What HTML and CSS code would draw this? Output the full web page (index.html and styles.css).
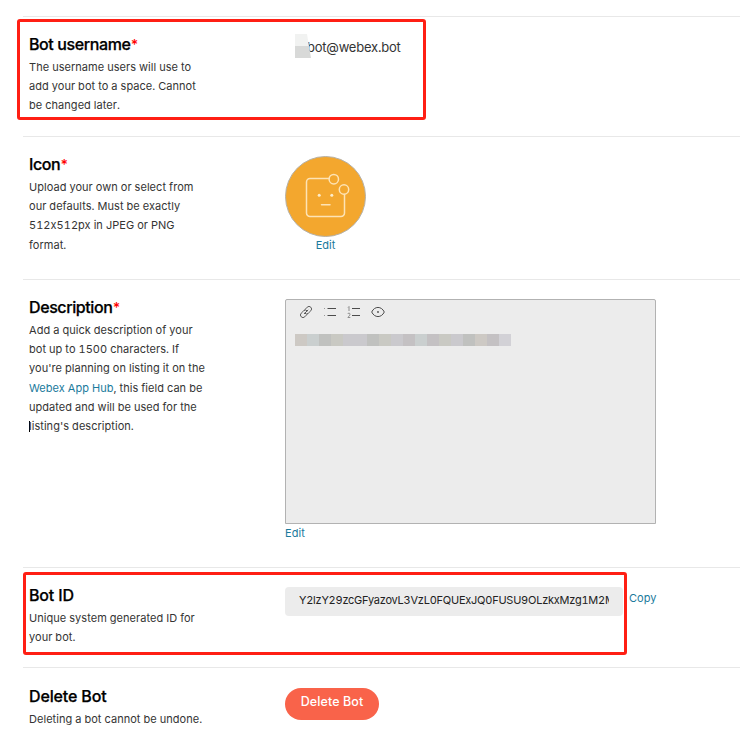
FILE: index.html
```html
<!DOCTYPE html>
<html lang="en">
<head>
<meta charset="utf-8">
<title>Bot settings</title>
<link rel="stylesheet" href="styles.css">
</head>
<body>
<main class="settings">
  <section class="row row-username">
    <div class="info">
      <h2>Bot username<span class="req">*</span></h2>
      <p>The username users will use to<br>add your bot to a space. Cannot<br>be changed later.</p>
    </div>
    <div class="field username"><span class="mask"></span><span class="address">bot@webex.bot</span></div>
  </section>

  <section class="row row-icon">
    <div class="info">
      <h2>Icon<span class="req">*</span></h2>
      <p>Upload your own or select from<br>our defaults. Must be exactly<br>512x512px in JPEG or PNG<br>format.</p>
    </div>
    <div class="field avatar-field">
      <svg class="avatar" width="81" height="81" viewBox="0 0 81 81" fill="none">
        <circle cx="40.500" cy="40.500" r="40" fill="#f3a72e" stroke="#b5b1a8"/>
        <g stroke="#fde3b5" stroke-width="1.500" stroke-linecap="round">
          <path d="M44 22.500H25a3.500 3.500 0 0 0-3.500 3.500V57a3.500 3.500 0 0 0 3.500 3.500H56a3.500 3.500 0 0 0 3.500-3.500V38.500"/>
          <circle cx="48.800" cy="23.200" r="4.700"/>
          <circle cx="59" cy="33.500" r="4.700"/>
          <path d="M36.500 48.800H45"/>
        </g>
        <circle cx="34.200" cy="39.300" r="1.500" fill="#fdecc9"/>
        <circle cx="46.800" cy="39.300" r="1.500" fill="#fdecc9"/>
      </svg>
      <a class="link">Edit</a>
    </div>
  </section>

  <section class="row row-description">
    <div class="info">
      <h2>Description<span class="req">*</span></h2>
      <p>Add a quick description of your<br>bot up to 1500 characters. If<br>you're planning on listing it on the<br><a class="link">Webex App Hub</a>, this field can be<br>updated and will be used for the<br><span class="caret"></span>listing's description.</p>
    </div>
    <div class="field editor-field">
      <div class="editor">
        <div class="toolbar">
          <svg width="14" height="14" viewBox="0 0 14 14" fill="none" stroke="#4c4c4c" stroke-width=".9" stroke-linecap="round">
            <path d="M5.300 8.700 8.900 5.100M6 4.500 8.200 2.200a2.500 2.500 0 0 1 3.600 3.600L9.400 8.200a2.500 2.500 0 0 1-3.500.1M8 9.500l-2.200 2.300a2.500 2.500 0 0 1-3.600-3.600L4.600 5.800a2.500 2.500 0 0 1 3.500-.1"/>
          </svg>
          <svg width="14" height="14" viewBox="0 0 14 14" fill="none" stroke="#4c4c4c">
            <path d="M4.500 3.500H13M4.500 10.500H13"/><path d="M1 3.500h1M1 10.500h1" stroke="#999"/>
          </svg>
          <svg width="14" height="14" viewBox="0 0 14 14" fill="none" stroke="#4c4c4c">
            <path d="M5 3.500h8M5 10.500h8"/><path d="M1 2.500 2 1.500V6M.8 9C1 7.700 3.200 7.800 3 9.300 3 10.300 1.500 11.500.9 12.500H3.300" stroke="#777" stroke-width=".8"/>
          </svg>
          <svg width="14" height="14" viewBox="0 0 14 14" fill="none" stroke="#4c4c4c">
            <path d="M.7 7C3.500.9 10.500.9 13.300 7 10.500 13.100 3.500 13.100.7 7Z"/><circle cx="7" cy="7" r=".9" fill="#4c4c4c" stroke="none"/>
          </svg>
        </div>
        <div class="redacted"><i></i><i></i><i></i><i></i><i></i><i></i><i></i><i></i><i></i><i></i><i></i><i></i><i></i><i></i><i></i><i></i><i></i><i></i></div>
      </div>
      <a class="link">Edit</a>
    </div>
  </section>

  <section class="row row-id">
    <div class="info">
      <h2>Bot ID</h2>
      <p>Unique system generated ID for<br>your bot.</p>
    </div>
    <div class="field id-field">
      <div class="id-box"><div class="id-text">Y2lzY29zcGFyazovL3VzL0FQUExJQ0FUSU9OLzkxMzg1M2M</div></div>
      <a class="link">Copy</a>
    </div>
  </section>

  <section class="row row-delete">
    <div class="info">
      <h2>Delete Bot</h2>
      <p>Deleting a bot cannot be undone.</p>
    </div>
    <div class="field"><button class="delete">Delete Bot</button></div>
  </section>
</main>
<div class="highlight highlight-username"></div>
<div class="highlight highlight-id"></div>
</body>
</html>
```
FILE: styles.css
```css
* { box-sizing: border-box; }
body {
  margin: 0;
  height: 744px;
  overflow: hidden;
  position: relative;
  background: #fff;
  color: #343434;
  font-family: Inter, "Liberation Sans", sans-serif;
  font-size: 11px;
  font-variant-numeric: tabular-nums;
  font-feature-settings: "calt" 0;
}
.settings { padding: 16px 0 0 23px; }
.row {
  display: flex;
  border-top: 1px solid #e8e8e8;
  padding: 19px 0 0 6px;
}
.row-username { height: 120px; }
.row-icon { height: 143px; }
.row-description { height: 288px; }
.row-id { height: 100px; }
.row-delete { height: 77px; padding-top: 20px; }
.info { width: 256px; flex: none; margin-top: -1px; }
h2 {
  margin: 0 0 4px;
  font-size: 16px;
  line-height: 19px;
  font-weight: 500;
  color: #000;
  -webkit-text-stroke: .25px #000;
  letter-spacing: -.4px;
}
.row-id h2, .row-delete h2 { letter-spacing: -.15px; }
.req { color: #f00; font-size: 14px; line-height: 0; margin-left: -.5px; -webkit-text-stroke: 0; }
p { margin: 0; line-height: 19.2px; letter-spacing: .04px; white-space: nowrap; }
.link { color: #1a7a9c; }
.field { min-width: 0; }
.username {
  display: flex;
  align-items: center;
  height: 24px;
  margin-top: -2px;
  padding-left: 10px;
  font-size: 13px;
  letter-spacing: -.22px;
  line-height: 16px;
}
.address { padding-top: 2px; }
.mask {
  width: 16px;
  height: 24px;
  margin-right: -4px;
  z-index: 1;
  background: linear-gradient(#f1f2f1 50%, #d8d9d8 50%);
  clip-path: polygon(0 0, 75% 0, 100% 100%, 0 100%);
}
.avatar-field { display: flex; flex-direction: column; align-items: center; width: 81px; }
.avatar { flex: none; margin: 0 0 2px; }
.avatar-field .link { line-height: 13px; }
.caret { display: inline-block; width: 1px; height: 11px; margin-right: -1px; background: #000; vertical-align: -2px; }
.editor {
  width: 371px;
  height: 225px;
  background: #ececec;
  border: 1px solid #b2b2b2;
  border-radius: 2px 2px 0 0;
  padding: 5px 0 0 13px;
}
.toolbar { display: flex; gap: 10px; }
.redacted { display: flex; margin: 15px 0 0 -4px; }
.redacted i { width: 12px; height: 12px; background: #cac9cd; }
.redacted i:nth-child(1), .redacted i:nth-child(16) { background: #cdc9c4; }
.redacted i:nth-child(2), .redacted i:nth-child(11) { background: #cacfcf; }
.redacted i:nth-child(3), .redacted i:nth-child(7), .redacted i:nth-child(15) { background: #c0c1bf; }
.redacted i:nth-child(4), .redacted i:nth-child(8), .redacted i:nth-child(13) { background: #c9c9c3; }
.redacted i:nth-child(10), .redacted i:nth-child(12), .redacted i:nth-child(17) { background: #c4c1c3; }
.redacted i:nth-child(18) { background: #d2d1d6; }
.editor-field .link { display: block; margin-top: 3px; line-height: 13px; letter-spacing: .1px; }
.id-field { display: flex; gap: 6px; }
.id-box {
  width: 338px;
  height: 29px;
  padding: 0 14px;
  border-radius: 4px;
  background: #ececec;
}
.id-text { overflow: hidden; white-space: nowrap; line-height: 27px; color: #222; letter-spacing: -.24px; }
.id-field .link { line-height: 22px; }
.delete {
  display: block;
  width: 94px;
  height: 32px;
  padding: 0 0 5px;
  border: 0;
  border-radius: 16px;
  background: #f9634a;
  color: #fff;
  font: 500 12.5px Inter, "Liberation Sans", sans-serif;
  letter-spacing: .1px;
}
.highlight { position: absolute; border: 3px solid #ff1f14; border-radius: 3px; }
.highlight-username { left: 17px; top: 19px; width: 409px; height: 101px; }
.highlight-id { left: 23px; top: 572px; width: 604px; height: 83px; }
```
